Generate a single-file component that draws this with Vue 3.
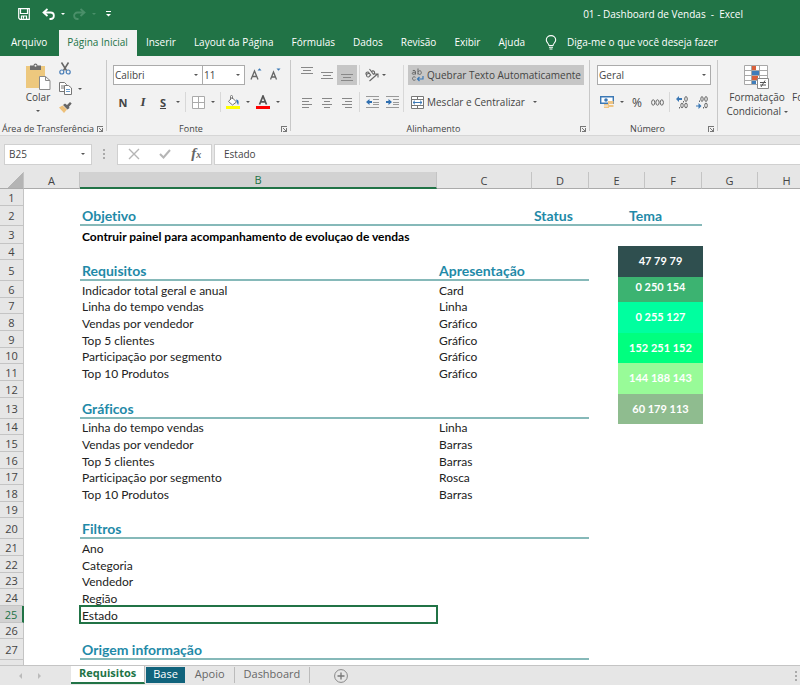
<script setup>
import { ref } from 'vue'

const menu = ['Inserir', 'Layout da Página', 'Fórmulas', 'Dados', 'Revisão', 'Exibir', 'Ajuda']
const columns = ['A', 'B', 'C', 'D', 'E', 'F', 'G', 'H']
const rows = [
  { n: 1, h: 17 },
  { n: 2, h: 20, title: true, wide: true, b: 'Objetivo', d: 'Status', e: 'Tema' },
  { n: 3, h: 18, b: 'Contruir painel para acompanhamento de evoluçao de vendas', bold: true },
  { n: 4, h: 16 },
  { n: 5, h: 21, title: true, b: 'Requisitos', c: 'Apresentação' },
  { n: 6, h: 17, b: 'Indicador total geral e anual', c: 'Card' },
  { n: 7, h: 16, b: 'Linha do tempo vendas', c: 'Linha' },
  { n: 8, h: 17, b: 'Vendas por vendedor', c: 'Gráfico' },
  { n: 9, h: 17, b: 'Top 5 clientes', c: 'Gráfico' },
  { n: 10, h: 16, b: 'Participação por segmento', c: 'Gráfico' },
  { n: 11, h: 17, b: 'Top 10 Produtos', c: 'Gráfico' },
  { n: 12, h: 17 },
  { n: 13, h: 21, title: true, b: 'Gráficos' },
  { n: 14, h: 16, b: 'Linha do tempo vendas', c: 'Linha' },
  { n: 15, h: 17, b: 'Vendas por vendedor', c: 'Barras' },
  { n: 16, h: 17, b: 'Top 5 clientes', c: 'Barras' },
  { n: 17, h: 16, b: 'Participação por segmento', c: 'Rosca' },
  { n: 18, h: 17, b: 'Top 10 Produtos', c: 'Barras' },
  { n: 19, h: 16 },
  { n: 20, h: 21, title: true, b: 'Filtros' },
  { n: 21, h: 17, b: 'Ano' },
  { n: 22, h: 17, b: 'Categoria' },
  { n: 23, h: 16, b: 'Vendedor' },
  { n: 24, h: 17, b: 'Região' },
  { n: 25, h: 17, b: 'Estado', active: true },
  { n: 26, h: 16 },
  { n: 27, h: 21, title: true, b: 'Origem informação' },
  { n: 28, h: 17, b: 'Planilha de vendas' }
]
const swatches = [
  { text: '47 79 79', color: '#2f4f4f', h: 31 },
  { text: '0 250 154', color: '#3cb371', h: 30, tucked: true },
  { text: '0 255 127', color: '#00ff9f', h: 31 },
  { text: '152 251 152', color: '#00ff7f', h: 30 },
  { text: '144 188 143', color: '#98fb98', h: 31 },
  { text: '60 179 113', color: '#8fbc8f', h: 30 }
]
const aligns = [
  { label: 'Alinhar em cima', d: 'M1 2.5h12M3 5.5h8M1 8.5h12', pos: 'up' },
  { label: 'Alinhar no meio', d: 'M1 3.5h12M3 6.5h8M1 9.5h12' },
  { label: 'Alinhar embaixo', d: 'M1 5.5h12M3 8.5h8M1 11.5h12', on: true }
]
const textAligns = [
  { label: 'Alinhar à esquerda', d: 'M2 2.5h10M2 5.5h7M2 8.5h10M2 11.500h7' },
  { label: 'Centralizar', d: 'M2 2.5h10M4 5.5h6M2 8.5h10M4 11.500h6' },
  { label: 'Alinhar à direita', d: 'M2 2.5h10M5 5.5h7M2 8.5h10M5 11.500h7' }
]
const cellName = ref('B25')
const formula = ref('Estado')
</script>

<template>
  <div class="excel">
    <header class="titlebar">
      <div class="quick">
        <button aria-label="Salvar">
          <svg width="12" height="12" viewBox="0 0 12 12"><path d="M.7.7h10.6v10.6H2L.7 10zM2.5.7v4.8h7V.7M3.5 11.300V8h5v3.300M5.500 8v2.500" fill="none" stroke="#fff" stroke-width="1.200" /></svg>
        </button>
        <button class="undo" aria-label="Desfazer">
          <svg width="13" height="12" viewBox="0 0 13 12"><path d="M5.500 1 1.500 4.500l4 3.500M2 4.500h6.500c4.500 0 4.500 6.500 0 6.500H7.500" fill="none" stroke="#fff" stroke-width="1.800" /></svg>
        </button>
        <i class="caret light"></i>
        <button class="redo" aria-label="Refazer">
          <svg width="13" height="12" viewBox="0 0 13 12"><path d="m7.500 1 4 3.500-4 3.500M11 4.500H4.500c-4.500 0-4.500 6.500 0 6.500h1" fill="none" stroke="#4a8f69" stroke-width="1.800" /></svg>
        </button>
        <i class="caret dim"></i>
        <button class="more" aria-label="Personalizar">
          <svg width="5" height="6" viewBox="0 0 5 6"><path d="M0 .5h5" stroke="#fff" /><path d="M0 3h5L2.500 5.500z" fill="#fff" /></svg>
        </button>
      </div>
      <h1>01 - Dashboard de Vendas&nbsp; -&nbsp; Excel</h1>
    </header>

    <nav class="menu">
      <a href="#" class="file">Arquivo</a>
      <a href="#" class="current">Página Inicial</a>
      <a v-for="m in menu" :key="m" href="#">{{ m }}</a>
      <a href="#" class="tell">
        <svg width="12" height="15" viewBox="0 0 12 15"><path d="M4 10.500C4 8.500 1.300 7.800 1.300 5a4.700 4.400 0 0 1 9.400 0c0 2.800-2.700 3.500-2.700 5.500zM4 12.300h4M4.500 14h3" fill="none" stroke="#fff" stroke-width="1.100" /></svg>
        Diga-me o que você deseja fazer
      </a>
    </nav>

    <section class="ribbon">
      <div class="group clipboard">
        <div class="body">
          <button class="paste">
            <svg width="25" height="27" viewBox="0 0 25 27">
              <path d="M0 3h19v22H0z" fill="#edc87e" />
              <path d="M4 2.500h3.500a2 2 0 0 1 4 0H15V7H4z" fill="#6d6d6d" /><circle cx="9.500" cy="2.800" r="1" fill="#f2f2f2" />
              <path d="M13.500 13.500h6l4.500 4v9H13.500zM19.500 13.500v4H24" fill="#fff" stroke="#8a8a8a" />
            </svg>
            <span>Colar</span>
            <i class="caret"></i>
          </button>
          <div class="clips">
            <button aria-label="Recortar">
              <svg width="12" height="13" viewBox="0 0 12 13"><path d="m2.500.5 5 8M9.500.5l-5 8" stroke="#666" stroke-width="1.500" /><circle cx="2.800" cy="10" r="2" fill="none" stroke="#4a7fb8" stroke-width="1.200" /><circle cx="9.200" cy="10" r="2" fill="none" stroke="#4a7fb8" stroke-width="1.200" /></svg>
            </button>
            <button class="copy" aria-label="Copiar">
              <svg width="13" height="13" viewBox="0 0 13 13"><path d="M.5.5h5l2 2v7h-7zM2 4h3M2 6h3" fill="#fff" stroke="#777" /><path d="M5.500 3.500h4l3 2.500v6.500h-7z" fill="#fff" stroke="#777" /><path d="M7 7.500h4M7 9.500h4" stroke="#6a9ccc" /></svg>
              <i class="caret"></i>
            </button>
            <button aria-label="Pincel de formatação">
              <svg width="13" height="11" viewBox="0 0 13 11"><path d="m0 5.500 3.500-2 4.500 4L5 11z" fill="#edc07a" /><path d="m4 3 2-1.500L8 3l3-3 1.700 1.500L10 4.700l.5 1.300L8.500 7.500z" fill="#666" /></svg>
            </button>
          </div>
        </div>
        <footer><span>Área de Transferência</span><i class="launch"></i></footer>
      </div>

      <div class="group font">
        <div class="body col">
          <div class="line">
            <label class="pick family"><select aria-label="Fonte"><option>Calibri</option></select></label>
            <label class="pick size"><select aria-label="Tamanho da fonte"><option>11</option></select></label>
            <button class="tool grow" aria-label="Aumentar fonte"><svg width="12" height="14" viewBox="0 0 12 14"><path d="M1 11.500 4.500 3 8 11.500M2.200 8.500h4.600" fill="none" stroke="#666" stroke-width="1.300" /><path d="M7.500 2.500 9.500.3l2 2.200z" fill="#3b78b5" /></svg></button>
            <button class="tool" aria-label="Diminuir fonte"><svg width="12" height="14" viewBox="0 0 12 14"><path d="M.5 11.500 3.500 4l3 7.500M1.500 9h4" fill="none" stroke="#666" stroke-width="1.300" /><path d="M6.500.5 8.500 2.700l2-2.200z" fill="#3b78b5" /></svg></button>
          </div>
          <div class="line">
            <button class="tool letter"><b>N</b></button>
            <button class="tool letter"><em>I</em></button>
            <button class="tool letter"><u>S</u></button>
            <span class="drop"><i class="caret"></i></span>
            <span class="sep"></span>
            <button class="tool" aria-label="Bordas"><svg width="13" height="13" viewBox="0 0 13 13"><path d="M.5.5h12v12H.5zM6.500.5v12M.5 6.500h12" fill="#fff" stroke="#aaa" /></svg></button>
            <span class="drop"><i class="caret"></i></span>
            <span class="sep"></span>
            <button class="tool" aria-label="Cor de preenchimento"><svg width="14" height="14" viewBox="0 0 14 14"><path d="m6 2.500 4.500 4.500L6.500 10 2.500 6.500zM4.500 5V1.500a1 1 0 0 1 2 0V4" fill="#fff" stroke="#777" /><path d="M10 4.500c3 0 3 3 2.200 5.500-1.200-1-1.200-3-2.200-5.500" fill="#3b78b5" /><path d="M0 11h14v3H0z" fill="#ff0" /></svg></button>
            <span class="drop"><i class="caret"></i></span>
            <button class="tool" aria-label="Cor da fonte"><svg width="14" height="14" viewBox="0 0 14 14"><path d="M3.500 9.500 7 1l3.500 8.500M4.500 6.800h5" fill="none" stroke="#555" stroke-width="1.700" /><path d="M0 11h14v3H0z" fill="#f00" /></svg></button>
            <span class="drop"><i class="caret"></i></span>
          </div>
        </div>
        <footer><span>Fonte</span><i class="launch"></i></footer>
      </div>

      <div class="group align">
        <div class="body">
          <div class="col">
            <div class="line">
              <button v-for="a in aligns" :key="a.label" class="tool" :class="[{ on: a.on }, a.pos]" :aria-label="a.label"><svg width="14" height="13" viewBox="0 0 14 13"><path :d="a.d" stroke="#888" /></svg></button>
              <span class="sep"></span>
              <button class="tool" aria-label="Orientação"><svg width="14" height="14" viewBox="0 0 14 14"><path d="M1 6.500C.5 4.500 3 3 4.200 5L6 7.500M2 8.500C.5 6.500 3.500 4.500 4.500 6M2 8.500c1 1.200 3.300 0 3-1.500M4.500 1l4 5.500M6.500 3.800c1.800-2.500 4.500.5 2 2.700M4.500 13l8-7M9.500 6h3.500v3.500" fill="none" stroke="#666" stroke-width="1.100" /></svg></button>
              <span class="drop near"><i class="caret"></i></span>
            </div>
            <div class="line">
              <button v-for="a in textAligns" :key="a.label" class="tool" :aria-label="a.label"><svg width="14" height="13" viewBox="0 0 14 13"><path :d="a.d" stroke="#888" /></svg></button>
              <span class="sep"></span>
              <button class="tool" aria-label="Diminuir recuo"><svg width="13" height="12" viewBox="0 0 13 12"><path d="M0 .5h13M7 3.500h6M7 6.500h6M7 8.500h6M0 11.500h13" stroke="#999" /><path d="M0 6l3.500-3v2H6v2H3.500v2z" fill="#2f6fb0" /></svg></button>
              <button class="tool" aria-label="Aumentar recuo"><svg width="13" height="12" viewBox="0 0 13 12"><path d="M0 .5h13M7 3.500h6M7 6.500h6M7 8.500h6M0 11.500h13" stroke="#999" /><path d="M6 6 2.500 3v2H0v2h2.500v2z" fill="#2f6fb0" /></svg></button>
            </div>
          </div>
          <span class="sep tall"></span>
          <div class="col words">
            <button class="wide on"><svg width="13" height="14" viewBox="0 0 13 14"><path d="M4.500 6.500V3.800C4.500 2 1.700 2 1.400 3.200M4.500 4.300C2.500 4 1.200 4.500 1.200 5.500s2.300 1.200 3.300-.3M7 .5v6M7 4c1-2 3.500-1.500 3.300.7S8 7 7 5.300M4.500 9.300C3 8.300 1.500 9 1.500 10.500s1.500 2.300 3 1.300" fill="none" stroke="#666" /><path d="M12 8v3H6.500M8.500 9 6.500 11l2 2" fill="none" stroke="#3b78b5" stroke-width="1.200" /></svg>Quebrar Texto Automaticamente</button>
            <button class="wide"><svg width="13" height="13" viewBox="0 0 13 13"><path d="M.5.5h12v12H.5zM.5 3.500h12M.5 9.500h12M6.500.5v3M6.500 9.500v3" fill="#fff" stroke="#777" /><path d="M2 6.500h9M4 4.700 2 6.500l2 1.800M9 4.700l2 1.800-2 1.800" fill="none" stroke="#3b78b5" /></svg>Mesclar e Centralizar<i class="caret"></i></button>
          </div>
        </div>
        <footer><span>Alinhamento</span><i class="launch"></i></footer>
      </div>

      <div class="group number">
        <div class="body col">
          <div class="line">
            <label class="pick format"><select aria-label="Formato de número"><option>Geral</option></select></label>
          </div>
          <div class="line">
            <button class="tool" aria-label="Formato de contabilização"><svg width="14" height="14" viewBox="0 0 14 14"><path d="M.7 1.700h12.600v6.600H.7z" fill="#fff" stroke="#3b78b5" stroke-width="1.400" /><circle cx="6" cy="5" r="1.800" fill="#3b78b5" /><path d="M8 6h5.500v3H8zM8 10h5.500v2H8zM4 9h5v1.500H4zM4 11.500h5V13H4z" fill="#efc483" /></svg></button>
            <span class="drop"><i class="caret"></i></span>
            <button class="tool percent">%</button>
            <button class="tool" aria-label="Separador de milhares"><svg width="13" height="7" viewBox="0 0 13 7"><g fill="none" stroke="#666"><ellipse cx="2.200" cy="3.500" rx="1.600" ry="2.700" /><ellipse cx="6.500" cy="3.500" rx="1.600" ry="2.700" /><ellipse cx="10.800" cy="3.500" rx="1.600" ry="2.700" /></g></svg></button>
            <span class="sep"></span>
            <button class="tool" aria-label="Aumentar casas decimais">
              <svg width="12" height="13" viewBox="0 0 12 13"><path d="m0 3 3-3v2h3v2H3v2z" fill="#3b78b5" /><path d="M7.500 5v1.500M3.500 11v1.500" stroke="#666" /><g fill="none" stroke="#666"><ellipse cx="10" cy="3" rx="1.300" ry="2.400" /><ellipse cx="6" cy="9.500" rx="1.200" ry="2.400" /><ellipse cx="10" cy="9.500" rx="1.300" ry="2.400" /></g></svg>
            </button>
            <button class="tool" aria-label="Diminuir casas decimais">
              <svg width="12" height="13" viewBox="0 0 12 13"><path d="M0 9.500h2.500v-2.500l3 3-3 3v-2.500H0z" fill="#3b78b5" /><path d="M3.500 4.500V6M7.500 11v1.500" stroke="#666" /><g fill="none" stroke="#666"><ellipse cx="6" cy="3" rx="1.200" ry="2.400" /><ellipse cx="10" cy="3" rx="1.300" ry="2.400" /><ellipse cx="10" cy="9.500" rx="1.300" ry="2.400" /></g></svg>
            </button>
          </div>
        </div>
        <footer><span>Número</span><i class="launch"></i></footer>
      </div>

      <div class="group styles">
        <button class="big">
          <svg width="26" height="24" viewBox="0 0 26 24">
            <path d="M.5.500h23v19H.5z" fill="#fff" stroke="#a8a8a8" />
            <path d="M7.500.5v19M15.500.5v19M.5 5.500h23M.5 10.500h23M.5 15.500h23" stroke="#a8a8a8" />
            <path d="M8 1h4v4H8zM8 11h6v4H8z" fill="#d9603b" /><path d="M8 6h7v4H8zM8 16h4v3H8z" fill="#3f7dbb" />
            <path d="M13.500 13.500h11v10h-11z" fill="#fff" stroke="#888" /><path d="M16 17.500h6M16 20h6M21 15.500l-4 6.500" stroke="#555" />
          </svg>
          <span>Formatação</span>
          <span>Condicional <i class="caret"></i></span>
        </button>
        <button class="big next"><span>Formatar como</span></button>
      </div>
    </section>

    <section class="formula">
      <div class="namebox"><input v-model="cellName" aria-label="Caixa de nome" /><i class="caret"></i></div>
      <i class="grip"></i>
      <div class="actions">
        <button aria-label="Cancelar"><svg width="12" height="12" viewBox="0 0 12 12"><path d="m1 1 10 10M11 1 1 11" stroke="#b5b5b5" stroke-width="1.400" /></svg></button>
        <button aria-label="Inserir"><svg width="12" height="10" viewBox="0 0 12 10"><path d="m1 5 3.500 3.500L11 1" fill="none" stroke="#b5b5b5" stroke-width="2" /></svg></button>
        <button class="fx">f<small>x</small></button>
      </div>
      <input v-model="formula" class="content" aria-label="Barra de fórmulas" />
    </section>

    <main class="sheet">
      <table>
        <colgroup>
          <col class="w-head" /><col class="w-a" /><col class="w-b" /><col class="w-c" /><col class="w-d" /><col class="w-e" /><col class="w-d" /><col class="w-e" /><col />
        </colgroup>
        <thead>
          <tr>
            <th class="corner"></th>
            <th v-for="c in columns" :key="c" :class="{ picked: c === 'B' }">{{ c }}</th>
          </tr>
        </thead>
        <tbody>
          <tr v-for="r in rows" :key="r.n" :style="{ height: r.h + 'px' }" :class="{ title: r.title, wide: r.wide, bold: r.bold, active: r.active }">
            <th>{{ r.n }}</th>
            <td></td>
            <td class="cell-b">{{ r.b }}</td>
            <td class="cell-c">{{ r.c }}</td>
            <td class="cell-d">{{ r.d }}</td>
            <td class="cell-e" colspan="2">{{ r.e }}</td>
            <td></td>
            <td></td>
          </tr>
        </tbody>
      </table>
      <div class="theme">
        <div v-for="s in swatches" :key="s.text" class="swatch" :class="{ tucked: s.tucked }" :style="{ background: s.color, height: s.h + 'px' }">{{ s.text }}</div>
      </div>
    </main>

    <nav class="tabs">
      <div class="arrows"><i class="prev"></i><i class="fwd"></i></div>
      <a href="#" class="current">Requisitos</a>
      <a href="#" class="base">Base</a>
      <a href="#">Apoio</a>
      <a href="#">Dashboard</a>
      <button class="add" aria-label="Nova planilha"><svg width="14" height="14" viewBox="0 0 14 14"><circle cx="7" cy="7" r="6.400" fill="none" stroke="#888" /><path d="M7 3.500v7M3.500 7h7" stroke="#777" stroke-width="1.300" /></svg></button>
      <i class="grip end"></i>
    </nav>
  </div>
</template>

<style>
body {
  margin: 0;
}
</style>

<style scoped>
.excel {
  display: flex;
  flex-direction: column;
  height: 100vh;
  overflow: hidden;
  background: #fff;
  color: #444;
  font-family: "Open Sans", "Noto Sans", sans-serif;
  font-size: 10px;
}
.excel * {
  box-sizing: border-box;
}
button,
input,
select {
  margin: 0;
  padding: 0;
  border: 0;
  background: none;
  color: inherit;
  font: inherit;
  appearance: none;
}
button {
  display: flex;
  align-items: center;
  justify-content: center;
  white-space: nowrap;
}
a {
  color: inherit;
  text-decoration: none;
  white-space: nowrap;
}
svg {
  display: block;
  flex: none;
}
.caret {
  flex: none;
  width: 0;
  height: 0;
  border: 2px solid transparent;
  border-top-color: #555;
  border-bottom: 0;
}
.caret.light {
  border-top-color: #fff;
}
.caret.dim {
  border-top-color: #4a8f69;
}

.titlebar {
  display: flex;
  flex: none;
  align-items: center;
  justify-content: space-between;
  height: 28px;
  padding: 0 57px 0 18px;
  background: #217346;
  color: #fff;
}
.titlebar h1 {
  margin: 0;
  font-size: 10px;
  font-weight: 400;
}
.quick {
  display: flex;
  align-items: center;
}
.undo {
  margin: 0 6px 0 12px;
}
.redo {
  margin: 0 6px 0 8px;
}
.more {
  margin-left: 10px;
}

.menu {
  display: flex;
  flex: none;
  height: 28px;
  padding-left: 2px;
  background: #217346;
  color: #fff;
}
.menu a {
  display: flex;
  align-items: center;
  padding: 0 9px;
}
.menu .file {
  padding-right: 12px;
}
.menu .current {
  margin-top: 2px;
  padding-bottom: 2px;
  padding-left: 8px;
  background: #f2f2f2;
  color: #217346;
}
.menu .tell {
  gap: 10px;
  padding-left: 11px;
}

.ribbon {
  display: flex;
  flex: none;
  height: 80px;
  overflow: hidden;
  border-bottom: 1px solid #d6d6d6;
  background: #f2f2f2;
}
.group {
  display: flex;
  position: relative;
  flex: none;
  flex-direction: column;
  justify-content: space-between;
  padding-top: 9px;
}
.group:not(.styles)::after {
  position: absolute;
  top: 4px;
  right: 0;
  bottom: 4px;
  width: 1px;
  background: #c8c8c8;
  content: "";
}
.group footer {
  position: relative;
  font-size: 9px;
  line-height: 13px;
  text-align: center;
  white-space: nowrap;
}
.launch {
  position: absolute;
  right: 4px;
  bottom: 3px;
  width: 6px;
  height: 6px;
  border-top: 1px solid #777;
  border-left: 1px solid #777;
}
.launch::after {
  position: absolute;
  right: 0;
  bottom: 0;
  width: 3px;
  height: 3px;
  border-right: 1px solid #777;
  border-bottom: 1px solid #777;
  background: linear-gradient(45deg, transparent 40%, #777 40% 60%, transparent 60%);
  content: "";
}
.body {
  display: flex;
}
.col {
  display: flex;
  flex-direction: column;
  gap: 7px;
}
.line {
  display: flex;
  height: 20px;
}
.clipboard {
  width: 107px;
  padding-top: 6px;
}
.clipboard footer {
  padding-left: 2px;
  text-align: left;
}
.clipboard .body {
  padding-left: 24px;
}
.paste {
  flex-direction: column;
  width: 28px;
}
.paste span {
  margin-bottom: 6px;
}
.clips {
  display: flex;
  flex-direction: column;
  align-items: flex-start;
  gap: 7px;
  padding-left: 7px;
}
.copy {
  gap: 6px;
}
.font {
  width: 184px;
  padding-left: 6px;
}
.font footer {
  padding-right: 22px;
}
.pick {
  position: relative;
  height: 20px;
  border: 1px solid #ababab;
  background: #fff;
}
.pick select {
  width: 100%;
  height: 100%;
  padding-left: 1px;
}
.pick::after {
  position: absolute;
  top: 8px;
  right: 4px;
  border: 2px solid transparent;
  border-top-color: #555;
  border-bottom: 0;
  content: "";
}
.family {
  width: 90px;
}
.size {
  width: 42px;
  border-left: 0;
}
.format {
  width: 114px;
}
.grow {
  margin-left: 1px;
}
.tool {
  flex: none;
  width: 20px;
  height: 20px;
}
.on {
  background: #c6c6c6;
}
.up {
  align-items: flex-start;
}
.letter {
  font-size: 11px;
}
.letter em {
  font-family: "Liberation Serif", serif;
  font-size: 13px;
  font-weight: 700;
}
.letter u {
  font-weight: 700;
}
.drop {
  display: flex;
  align-items: center;
  justify-content: center;
  width: 10px;
}
.near {
  justify-content: flex-start;
}
.sep {
  width: 1px;
  margin: 0 2px;
  background: #d8d8d8;
}
.tall {
  margin: 0 4px 0 1px;
}
.align {
  width: 299px;
  padding-left: 6px;
}
.align footer {
  padding-right: 20px;
}
.words {
  flex: 1;
  margin-right: 6px;
}
button.wide {
  justify-content: flex-start;
  gap: 3px;
  height: 20px;
  padding-left: 3px;
}
button.wide .caret {
  margin-left: 5px;
}
.number {
  width: 128px;
  padding-left: 7px;
}
.number footer {
  padding-right: 20px;
}
.percent {
  font-size: 12px;
}
.styles {
  flex: 1;
  flex-direction: row;
  justify-content: flex-start;
  min-width: 0;
}
.big {
  flex: none;
  flex-direction: column;
  justify-content: flex-start;
  width: 78px;
  line-height: 14px;
}
.big svg {
  margin-bottom: 1px;
}
.big .caret {
  display: inline-block;
  vertical-align: middle;
}
.next {
  width: auto;
  margin-left: -4px;
  padding-top: 25px;
}

.formula {
  display: flex;
  flex: none;
  align-items: center;
  height: 36px;
  padding-left: 4px;
  background: #e6e6e6;
}
.namebox {
  display: flex;
  align-items: center;
  width: 88px;
  height: 21px;
  padding-right: 6px;
  border: 1px solid #d0d0d0;
  background: #fff;
}
.namebox input {
  flex: 1;
  min-width: 0;
  padding-left: 4px;
}
.grip {
  width: 2px;
  height: 10px;
  margin: 0 12px 0 11px;
  background: repeating-linear-gradient(#aaa 0 2px, transparent 2px 4px);
}
.actions {
  display: flex;
  align-items: center;
  justify-content: space-around;
  width: 95px;
  height: 21px;
  margin-right: 2px;
  border: 1px solid #d0d0d0;
  background: #fff;
}
.fx {
  align-items: baseline;
  color: #666;
  font-family: "Liberation Serif", serif;
  font-size: 15px;
  font-style: italic;
  font-weight: 700;
  line-height: 16px;
}
.fx small {
  font-size: 10px;
}
.content {
  flex: 1;
  min-width: 0;
  height: 21px;
  padding-left: 9px;
  border: 1px solid #d0d0d0;
  border-right: 0;
  background: #fff;
}

.sheet {
  position: relative;
  flex: 1;
  min-height: 0;
  overflow: hidden;
}
table {
  width: 100%;
  min-width: 816px;
  border-spacing: 0;
  table-layout: fixed;
}
.w-head {
  width: 24px;
}
.w-a {
  width: 56px;
}
.w-b {
  width: 357px;
}
.w-c {
  width: 95px;
}
.w-d {
  width: 57px;
}
.w-e {
  width: 56px;
}
th {
  padding: 0;
  border-right: 1px solid #c4c4c4;
  background: #e6e6e6;
  color: #444;
  font-size: 11px;
  font-weight: 400;
  line-height: 15px;
}
thead th {
  height: 17px;
  border-bottom: 1px solid #ababab;
}
thead .picked {
  border-bottom: 2px solid #217346;
  background: #d2d2d2;
  color: #217346;
}
thead .corner {
  background: linear-gradient(135deg, #e6e6e6 60%, #b4b4b4 60%);
}
tbody th {
  border-bottom: 1px solid #c4c4c4;
}
td {
  padding: 0 0 0 2px;
  color: #222;
  font-family: Lato, "Open Sans", sans-serif;
  font-size: 12px;
  font-variant-ligatures: none;
  line-height: 15px;
  vertical-align: bottom;
  white-space: nowrap;
}
.bold td {
  color: #000;
  font-weight: 700;
}
.title td {
  color: #1f8aa8;
  font-size: 14px;
  font-weight: 700;
  line-height: 16px;
}
.title .cell-b,
.title .cell-c,
.title .cell-d,
.wide .cell-e {
  border-bottom: 2px solid #86b9b9;
}
td.cell-e {
  padding: 0;
  text-align: center;
}
.active th {
  border-right: 2px solid #217346;
  background: #d2d2d2;
  color: #217346;
}
.active .cell-b {
  outline: 2px solid #217346;
  outline-offset: -1px;
}
.theme {
  position: absolute;
  top: 74px;
  left: 618px;
  width: 85px;
}
.swatch {
  position: relative;
  z-index: 1;
  color: #fff;
  font-family: Lato, "Open Sans", sans-serif;
  font-size: 11px;
  font-weight: 700;
  line-height: 30px;
  text-align: center;
}
.tucked {
  z-index: 0;
  margin-top: -5px;
}

.tabs {
  display: flex;
  flex: none;
  align-items: center;
  height: 20px;
  border-top: 1px solid #c4c4c4;
  background: #e6e6e6;
  color: #666;
  font-size: 11px;
}
.arrows {
  display: flex;
  gap: 16px;
  width: 71px;
  padding-left: 19px;
}
.prev,
.fwd {
  border: 3px solid transparent;
}
.prev {
  border-left: 0;
  border-right-color: #bbb;
}
.fwd {
  border-right: 0;
  border-left-color: #bbb;
}
.tabs a {
  height: 16px;
  margin-bottom: 2px;
  padding: 0 9px;
  border-right: 1px solid #bbb;
  line-height: 14px;
}
.tabs .current {
  height: 18px;
  padding: 0 8px;
  border-bottom: 2px solid #217346;
  background: #fff;
  color: #217346;
  font-weight: 700;
}
.tabs .base {
  margin-right: 1px;
  margin-left: 1px;
  padding: 0 7px;
  border: 0;
  background: #10637c;
  color: #fff;
}
.add {
  margin-left: 24px;
}
.end {
  margin: 0 3px 0 auto;
}
</style>
